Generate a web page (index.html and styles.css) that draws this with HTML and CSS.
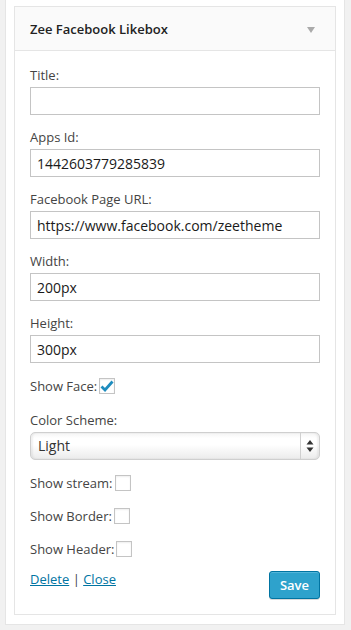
FILE: index.html
```html
<!DOCTYPE html>
<html lang="en">
	<head>
		<meta charset="UTF-8" />
		<meta name="viewport" content="width=device-width, initial-scale=1.0" />
		<title>Zee Facebook Likebox</title>
		<link rel="stylesheet" href="styles.css">
	</head>
	<body>
		<div class="sidebar">
			<div class="widget">
				<div class="widget-top">
					<h4 class="widget-title">Zee Facebook Likebox</h4>
					<span class="widget-toggle"></span>
				</div>
				<div class="widget-inside">
					<p class="field">
						<label>Title:</label>
						<input class="widefat" type="text" value="">
					</p>
					<p class="field">
						<label>Apps Id:</label>
						<input class="widefat" type="text" value="1442603779285839">
					</p>
					<p class="field">
						<label>Facebook Page URL:</label>
						<input class="widefat" type="text" value="https://www.facebook.com/zeetheme">
					</p>
					<p class="field">
						<label>Width:</label>
						<input class="widefat" type="text" value="200px">
					</p>
					<p class="field">
						<label>Height:</label>
						<input class="widefat" type="text" value="300px">
					</p>
					<p class="check-row">
						<label>Show Face:</label>
						<span class="checkbox">
							<svg width="14" height="12" viewBox="0 0 14 12"><path d="M1.5 6.5 L5 10 L12.5 1.5" fill="none" stroke="#1e8cbe" stroke-width="2.8"/></svg>
						</span>
					</p>
					<p class="field select-field">
						<label>Color Scheme:</label>
						<span class="select">
							<span class="select-value">Light</span>
							<span class="select-arrows">
								<svg width="8" height="14" viewBox="0 0 8 14"><path d="M4 1 L7.5 5.5 H0.5 Z M4 13 L7.5 8.5 H0.5 Z" fill="#333"/></svg>
							</span>
						</span>
					</p>
					<p class="check-row">
						<label>Show stream:</label>
						<span class="checkbox"></span>
					</p>
					<p class="check-row">
						<label>Show Border:</label>
						<span class="checkbox"></span>
					</p>
					<p class="check-row check-row-last">
						<label>Show Header:</label>
						<span class="checkbox"></span>
					</p>
					<div class="widget-control-actions">
						<div class="control-links">
							<a href="#">Delete</a> | <a href="#">Close</a>
						</div>
						<button class="button-primary">Save</button>
					</div>
				</div>
			</div>
		</div>
	</body>
</html>
```

FILE: styles.css
```css
body {
	margin: 0;
	background-color: #f1f1f1;
	font-family: "Open Sans", "Liberation Sans", sans-serif;
	font-size: 13px;
	color: #444;
	height: 630px;
	overflow: hidden;
}
.sidebar {
	margin: 0 6px 0 5px;
	padding: 6px 8px 9px 8px;
	background-color: #fff;
	border: 1px solid #e5e5e5;
	border-top: none;
}
.widget {
	border: 1px solid #e5e5e5;
	background-color: #fff;
}
.widget-top {
	display: flex;
	align-items: center;
	justify-content: space-between;
	height: 43px;
	padding: 0 20px 0 15px;
	background-color: #fafafa;
	border-bottom: 1px solid #e5e5e5;
}
.widget-title {
	margin: 0;
	font-size: 13px;
	font-weight: 600;
	color: #222;
}
.widget-toggle {
	width: 0;
	height: 0;
	border-left: 4px solid transparent;
	border-right: 4px solid transparent;
	border-top: 6px solid #aaa;
	margin-top: 2px;
}
.widget-inside {
	padding: 15px;
}
.field {
	margin: 0 0 13px 0;
}
.field label {
	display: block;
	line-height: 19px;
	margin-bottom: 2px;
}
.widefat {
	display: block;
	box-sizing: border-box;
	width: 100%;
	height: 28px;
	margin: 0;
	padding: 2px 6px;
	border: 1px solid #c4c4c4;
	font-family: "Open Sans", "Liberation Sans", sans-serif;
	font-size: 14px;
	color: #1a1a1a;
	background-color: #fff;
	outline: none;
}
.check-row {
	display: flex;
	align-items: center;
	height: 20px;
	margin: 0 0 13px 0;
}
.check-row-last {
	margin-bottom: 10px;
}
.checkbox {
	display: inline-flex;
	align-items: center;
	justify-content: center;
	box-sizing: border-box;
	width: 16px;
	height: 16px;
	margin-left: 2px;
	border: 1px solid #c4c4c4;
	background-color: #fff;
	box-shadow: inset 0 1px 2px rgba(0, 0, 0, 0.07);
}
.select-field {
	margin-top: 15px;
}
.select {
	display: flex;
	align-items: stretch;
	box-sizing: border-box;
	height: 28px;
	border: 1px solid #cfcfcf;
	border-radius: 5px;
	background: linear-gradient(to bottom, #f4f4f4 0%, #fff 20%, #fff 45%, #ebebeb 100%);
	box-shadow: inset 2px 0 2px rgba(0, 0, 0, 0.06), inset -2px 0 2px rgba(0, 0, 0, 0.06);
}
.select-value {
	flex: 1;
	padding-left: 7px;
	line-height: 26px;
	font-size: 14px;
	color: #333;
}
.select-arrows {
	display: flex;
	align-items: center;
	justify-content: center;
	width: 18px;
	border-left: 1px solid #d0d0d0;
}
.widget-control-actions {
	display: flex;
	justify-content: space-between;
	align-items: flex-start;
}
.control-links {
	line-height: 20px;
	color: #444;
}
.control-links a {
	color: #0074a2;
}
.button-primary {
	height: 28px;
	padding: 0 10px 1px;
	border: 1px solid #0074a2;
	border-radius: 3px;
	background-color: #2ea2cc;
	box-shadow: inset 0 1px 0 rgba(120, 200, 230, 0.5), 0 1px 0 rgba(0, 0, 0, 0.15);
	color: #fff;
	font-family: "Open Sans", "Liberation Sans", sans-serif;
	font-size: 13px;
	font-weight: 600;
	margin-top: 2px;
	cursor: pointer;
}
```
